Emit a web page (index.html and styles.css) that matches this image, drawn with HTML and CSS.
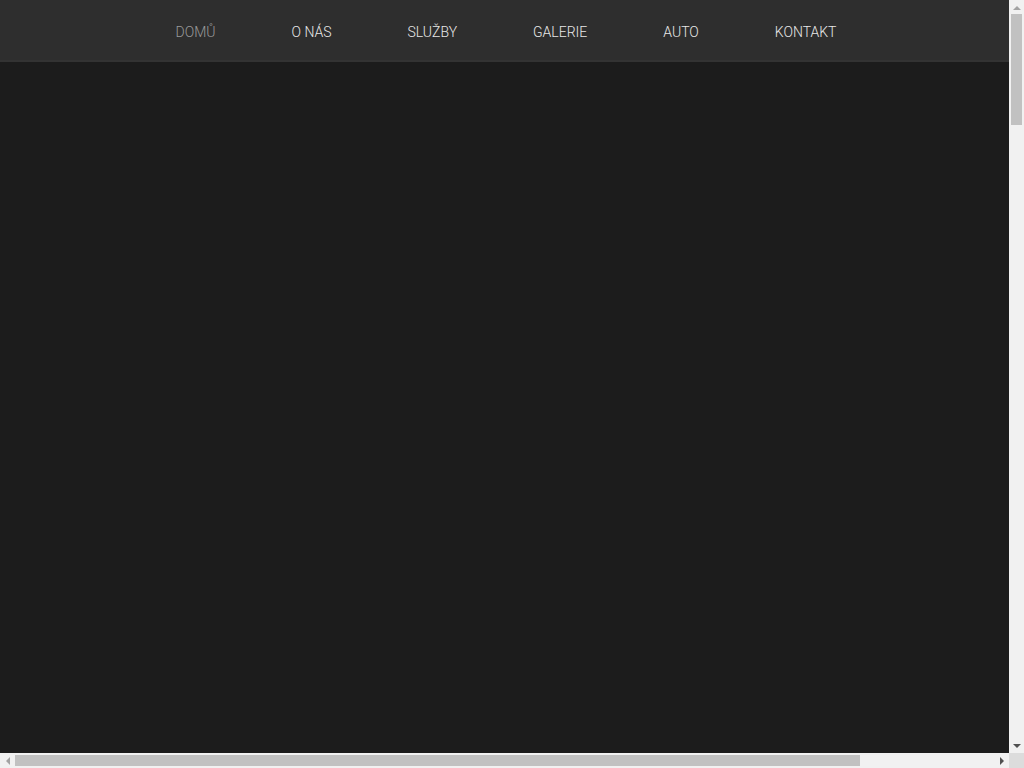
FILE: index.html
```html
<!DOCTYPE html>
<html lang="cs">
<head>
    <meta charset="UTF-8">
    <meta name="viewport" content="width=device-width, initial-scale=1.0">
    <title>Domů</title>
    <link rel="stylesheet" href="styles.css">
</head>
<body>
    <div class="page">
        <header class="site-header">
            <nav class="main-nav">
                <a href="#domu" class="nav-link active">Domů</a>
                <a href="#o-nas" class="nav-link">O nás</a>
                <a href="#sluzby" class="nav-link">Služby</a>
                <a href="#galerie" class="nav-link">Galerie</a>
                <a href="#auto" class="nav-link">Auto</a>
                <a href="#kontakt" class="nav-link">Kontakt</a>
            </nav>
        </header>
        <main class="content">
            <section class="slider" id="domu"></section>
            <section class="section" id="o-nas"></section>
        </main>
    </div>
    <!-- scrollbars of the page frame -->
    <div class="scrollbar scrollbar-v">
        <span class="arrow arrow-up"></span>
        <div class="track"><div class="thumb"></div></div>
        <span class="arrow arrow-down"></span>
    </div>
    <div class="scrollbar scrollbar-h">
        <span class="arrow arrow-left"></span>
        <div class="track"><div class="thumb"></div></div>
        <span class="arrow arrow-right"></span>
    </div>
    <div class="scrollbar-corner"></div>
</body>
</html>
```

FILE: styles.css
```css
html, body {
    margin: 0;
    padding: 0;
    height: 100%;
    overflow: hidden;
}
body {
    background-color: #1c1c1c;
    color: #e6e6e6;
    font-family: Roboto, "Liberation Sans", sans-serif;
    display: grid;
    grid-template-columns: 1fr 15px;
    grid-template-rows: 1fr 15px;
    height: 100vh;
}
.page {
    overflow: hidden;
    min-width: 0;
}
.site-header {
    background-color: #2e2e2e;
    height: 60px;
    border-bottom: 2px solid #333;
}
.main-nav {
    display: flex;
    justify-content: center;
    align-items: center;
    gap: 76px;
    height: 60px;
    padding-left: 3px;
}
.nav-link {
    color: #e8e8e8;
    text-decoration: none;
    text-transform: uppercase;
    font-size: 14px;
    font-weight: 300;
    padding-top: 4px;
}
.nav-link.active {
    color: #9a9a9a;
}
.content {
    background-color: #1c1c1c;
}
.slider {
    height: 800px;
}
.section {
    height: 800px;
}

/* scrollbars */
.scrollbar {
    background-color: #f1f1f1;
    display: flex;
}
.scrollbar-v {
    flex-direction: column;
}
.scrollbar .track {
    flex: 1;
    display: flex;
}
.scrollbar-v .track {
    flex-direction: column;
}
.scrollbar .thumb {
    background-color: #c1c1c1;
}
.scrollbar-v .thumb {
    height: 111px;
    margin: -1px 2px 0;
}
.scrollbar-h .thumb {
    width: 845px;
    margin: 2px 0;
}
.arrow {
    width: 15px;
    height: 15px;
    flex: none;
    display: flex;
    align-items: center;
    justify-content: center;
}
.arrow::before {
    content: '';
    width: 0;
    height: 0;
    border: 4px solid transparent;
}
.arrow-up::before {
    border-top: 0;
    border-bottom-color: #a3a3a3;
}
.arrow-down::before {
    border-bottom: 0;
    border-top-color: #505050;
}
.arrow-left::before {
    border-left: 0;
    border-right-color: #a3a3a3;
}
.arrow-right::before {
    border-right: 0;
    border-left-color: #505050;
}
.scrollbar-corner {
    background-color: #dcdcdc;
}
```
